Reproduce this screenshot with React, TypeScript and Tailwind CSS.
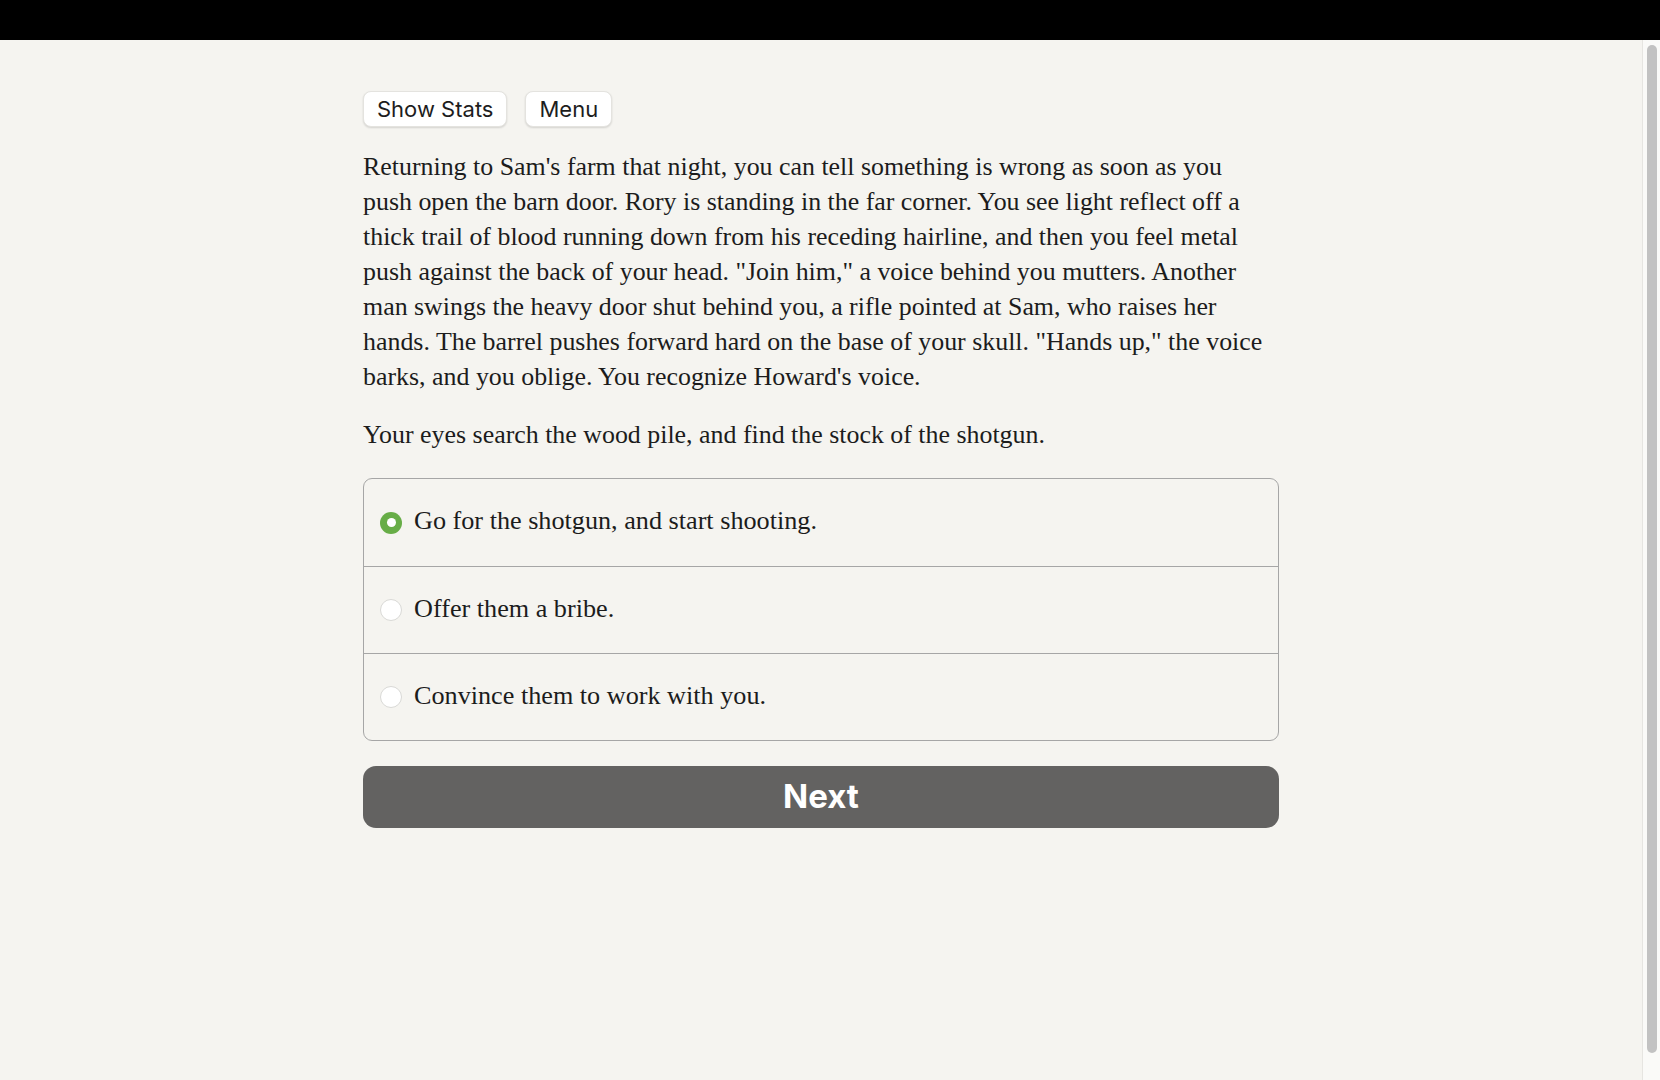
import { useState } from "react";

const storyLines = [
  "Returning to Sam's farm that night, you can tell something is wrong as soon as you",
  "push open the barn door. Rory is standing in the far corner. You see light reflect off a",
  "thick trail of blood running down from his receding hairline, and then you feel metal",
  "push against the back of your head. \"Join him,\" a voice behind you mutters. Another",
  "man swings the heavy door shut behind you, a rifle pointed at Sam, who raises her",
  "hands. The barrel pushes forward hard on the base of your skull. \"Hands up,\" the voice",
  "barks, and you oblige. You recognize Howard's voice.",
];

const choices = [
  "Go for the shotgun, and start shooting.",
  "Offer them a bribe.",
  "Convince them to work with you.",
];

const serif = "font-['Liberation_Serif','Times_New_Roman',serif]";
const sans = "font-['Inter','Liberation_Sans',sans-serif]";

function TopButton({ label }: { label: string }) {
  return (
    <button
      className={`${sans} h-9 rounded-lg border border-[#e4e3df] bg-white px-[13px] text-[22px] leading-none text-[#1d1d1d] shadow-[0_1px_2px_rgba(0,0,0,0.14)]`}
    >
      {label}
    </button>
  );
}

export default function App() {
  const [selected, setSelected] = useState(0);

  return (
    <div className="relative min-h-screen bg-[#f5f4f0]">
      <div className="h-10 bg-black" />

      <div className="pr-[18px]">
        <div className="mx-auto w-[916px] pt-[51px]">
          <div className="flex gap-[18px]">
            <TopButton label="Show Stats" />
            <TopButton label="Menu" />
          </div>

          <p
            className={`${serif} mt-[22px] whitespace-nowrap text-[25.9px] leading-[35px] text-[#1c1c1c]`}
          >
            {storyLines.map((line, i) => (
              <span key={i}>
                {line}
                {i < storyLines.length - 1 && <br />}
              </span>
            ))}
          </p>

          <p className={`${serif} mt-[23px] text-[25.9px] leading-[35px] text-[#1c1c1c]`}>
            Your eyes search the wood pile, and find the stock of the shotgun.
          </p>

          <div className="mt-[26px] overflow-hidden rounded-[9px] border border-[#a6a6a6]">
            {choices.map((choice, i) => (
              <label
                key={choice}
                onClick={() => setSelected(i)}
                className={`flex h-[87px] cursor-pointer items-center gap-[12px] pl-[16px] ${
                  i > 0 ? "border-t border-[#a6a6a6]" : ""
                }`}
              >
                {selected === i ? (
                  <span className="flex h-[22px] w-[22px] items-center justify-center rounded-full bg-[#67ad47]">
                    <span className="h-[9px] w-[9px] rounded-full bg-white" />
                  </span>
                ) : (
                  <span className="h-[22px] w-[22px] rounded-full border border-[#d9d9d6] bg-white" />
                )}
                <span className={`${serif} -mt-[2px] text-[26.2px] leading-none text-[#1c1c1c]`}>
                  {choice}
                </span>
              </label>
            ))}
          </div>

          <button
            className={`${sans} mt-[25px] flex h-[62px] w-full items-center justify-center rounded-[13px] bg-[#636261] text-[33px] font-bold text-white`}
          >
            Next
          </button>
        </div>
      </div>

      {/* fake scrollbar */}
      <div className="absolute bottom-0 right-0 top-10 w-[18px] border-l border-[#e6e5e1] bg-[#fafaf8]">
        <div className="mx-auto mt-[5px] h-[1008px] w-[10px] rounded-full bg-[#c2c2c2]" />
      </div>
    </div>
  );
}
